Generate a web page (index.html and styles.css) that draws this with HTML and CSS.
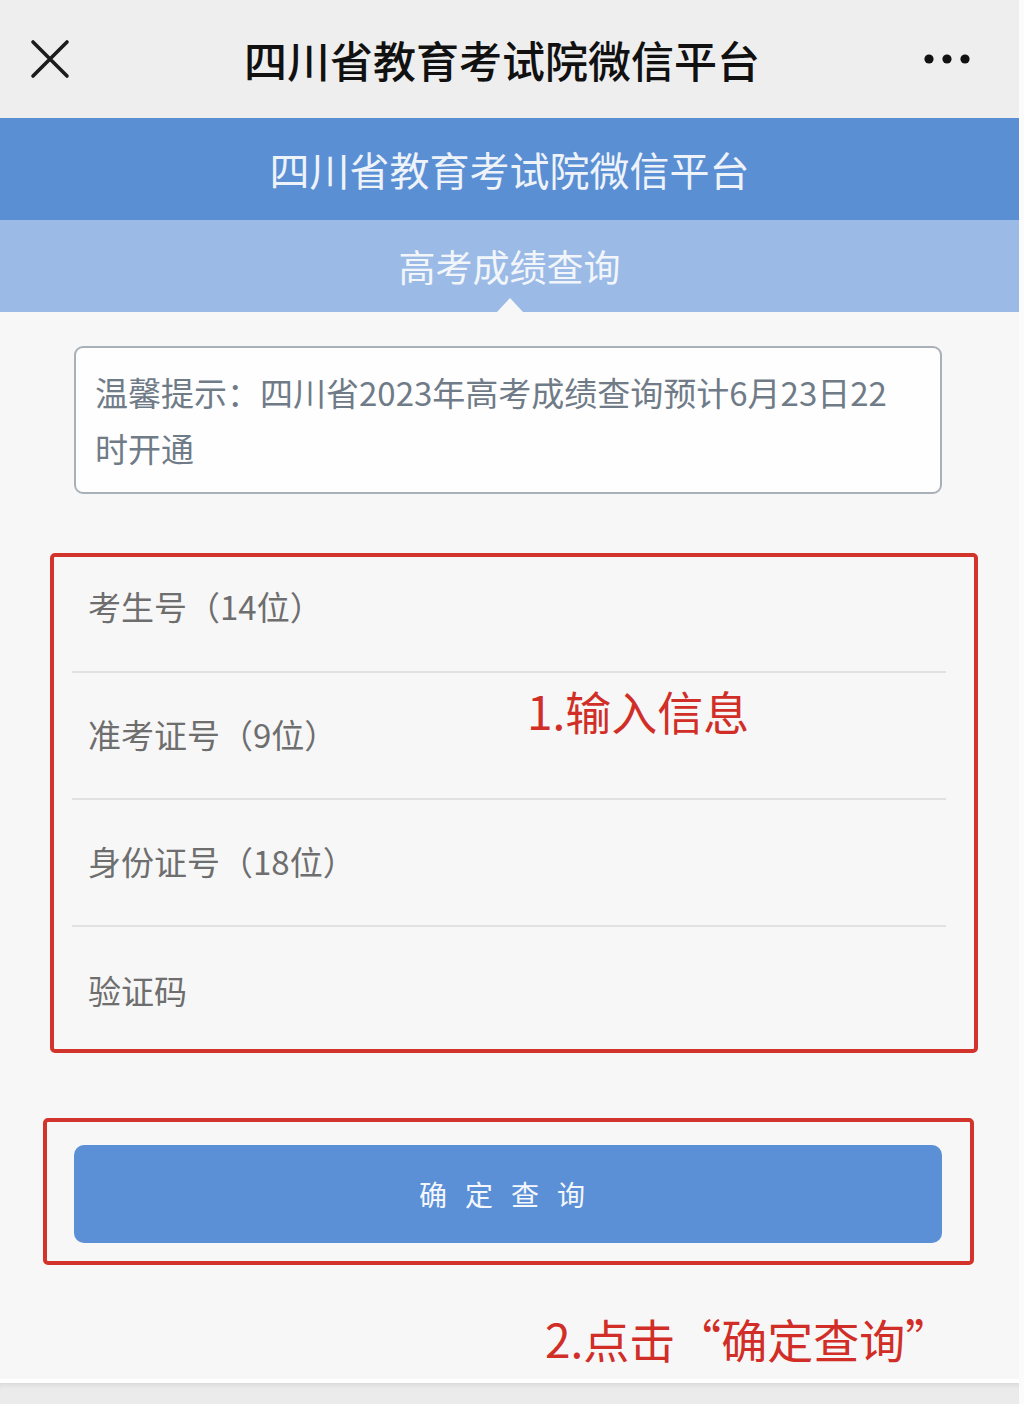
FILE: index.html
```html
<!DOCTYPE html>
<html lang="zh-CN">
<head>
<meta charset="utf-8">
<title>四川省教育考试院微信平台</title>
<link rel="stylesheet" href="styles.css">
</head>
<body>
<div class="page">
  <div class="topbar">
    <svg class="close" width="40" height="40" viewBox="0 0 40 40" aria-hidden="true">
      <path d="M3 3 L37 37 M37 3 L3 37" stroke="#1c1c1c" stroke-width="3.6" stroke-linecap="round" fill="none"/>
    </svg>
    <div class="topbar-title">四川省教育考试院微信平台</div>
    <svg class="more" width="46" height="12" viewBox="0 0 46 12" aria-hidden="true">
      <circle cx="5" cy="6" r="4.6" fill="#111"/>
      <circle cx="23" cy="6" r="4.6" fill="#111"/>
      <circle cx="41" cy="6" r="4.6" fill="#111"/>
    </svg>
  </div>
  <div class="header">四川省教育考试院微信平台</div>
  <div class="subheader">高考成绩查询</div>
  <main class="content">
    <div class="tip">温馨提示：四川省2023年高考成绩查询预计6月23日22时开通</div>
    <div class="mark mark-form">
      <div class="row row-first">考生号（14位）</div>
      <div class="row">准考证号（9位）</div>
      <div class="row">身份证号（18位）</div>
      <div class="row row-last">验证码</div>
      <div class="note note-input">1.输入信息</div>
    </div>
    <div class="mark mark-btn">
      <button class="submit" type="button">确定查询</button>
    </div>
    <p class="note note-click">2.点击“确定查询”</p>
  </main>
  <div class="bottom"></div>
</div>
</body>
</html>
```

FILE: styles.css
```css
html, body {
  margin: 0;
  padding: 0;
}
body {
  background: #fbfbfb;
  font-family: "Noto Sans CJK SC", "Noto Sans", sans-serif;
}
.page {
  width: 1019px;
  min-height: 1404px;
  background: #f7f7f7;
  display: flex;
  flex-direction: column;
}
.topbar {
  height: 118px;
  background: #eeeeee;
  display: flex;
  align-items: center;
  flex-shrink: 0;
}
.close {
  margin-left: 30px;
  flex-shrink: 0;
}
.topbar-title {
  flex: 1;
  text-align: center;
  font-size: 43px;
  font-weight: 500;
  color: #111;
  line-height: 1;
  padding-left: 10px;
}
.more {
  margin-right: 49px;
  flex-shrink: 0;
}
.header {
  height: 102px;
  background: #5b8fd3;
  color: #eef3fa;
  font-size: 40px;
  display: flex;
  align-items: center;
  justify-content: center;
  flex-shrink: 0;
}
.subheader {
  position: relative;
  height: 92px;
  background: #9bbbe6;
  color: #f2f6fb;
  font-size: 37px;
  display: flex;
  align-items: center;
  justify-content: center;
  flex-shrink: 0;
}
.subheader::after {
  content: "";
  position: absolute;
  bottom: 0;
  left: 50%;
  transform: translateX(-50%);
  border-left: 13px solid transparent;
  border-right: 13px solid transparent;
  border-bottom: 14px solid #f7f7f7;
}
.content {
  padding-top: 34px;
}
.tip {
  box-sizing: border-box;
  margin-left: 74px;
  width: 868px;
  height: 148px;
  border: 2px solid #aab0b7;
  border-radius: 9px;
  background: #fefefe;
  padding: 16px 40px 0 19px;
  font-size: 33px;
  line-height: 56px;
  color: #707b88;
}
.mark {
  box-sizing: border-box;
  border: 4px solid #d2342c;
  border-radius: 5px;
}
.mark-form {
  position: relative;
  margin-top: 59px;
  margin-left: 50px;
  width: 928px;
  height: 500px;
}
.row {
  box-sizing: border-box;
  height: 127px;
  margin: 0 28px 0 18px;
  padding: 0 0 3px 16px;
  border-bottom: 2px solid #e1e1e1;
  display: flex;
  align-items: center;
  font-size: 33px;
  color: #6e6e6e;
}
.row-first {
  height: 116px;
  padding-bottom: 17px;
}
.row-last {
  height: 122px;
  border-bottom: 0;
  padding: 4px 0 0 16px;
}
.note {
  color: #d02e27;
  font-size: 46px;
  line-height: 60px;
  margin: 0;
}
.note-input {
  position: absolute;
  left: 473px;
  top: 123px;
}
.mark-btn {
  margin-top: 65px;
  margin-left: 43px;
  width: 931px;
  height: 147px;
  padding: 23px 0 0 27px;
}
.submit {
  display: block;
  width: 868px;
  height: 98px;
  border: 0;
  border-radius: 10px;
  background: #5b8fd6;
  color: #f4f7fc;
  font-family: inherit;
  font-size: 28px;
  letter-spacing: 18px;
  padding: 0 0 0 6px;
}
.note-click {
  margin: 43px 0 0 545px;
}
.bottom {
  margin-top: auto;
  height: 20px;
  background: #ebebeb;
  border-top: 1px solid #dcdcdc;
  box-shadow: 0 -4px 0 #ffffff, inset 0 4px 4px -2px rgba(0, 0, 0, 0.06);
  flex-shrink: 0;
}
```
